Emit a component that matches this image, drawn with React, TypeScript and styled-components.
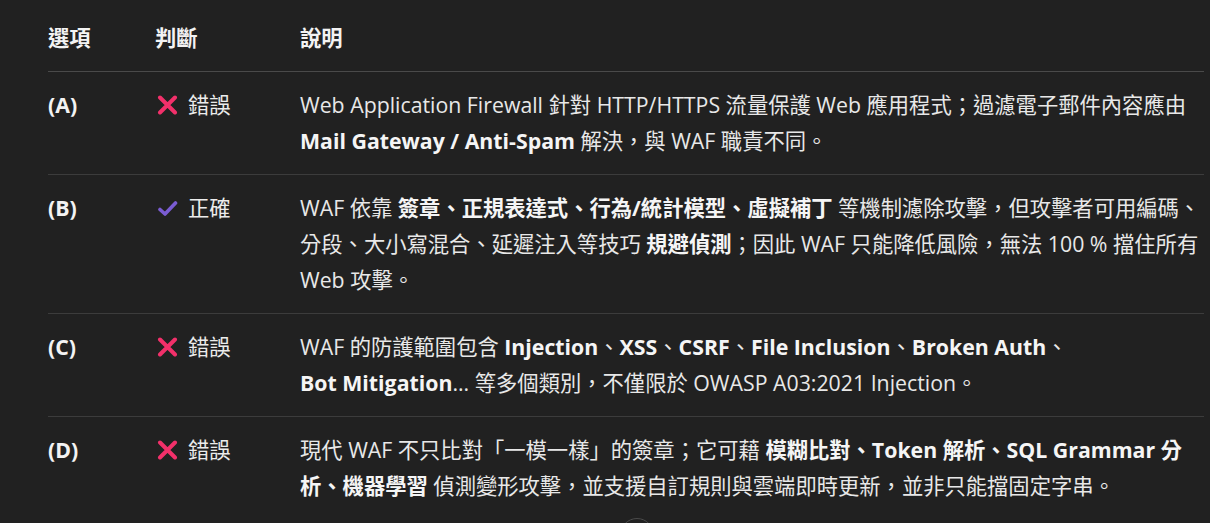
import React from "react";
import styled, { createGlobalStyle } from "styled-components";

const Global = createGlobalStyle`
  html, body { margin: 0; padding: 0; background: #212121; }
  body {
    font-family: "Open Sans", "Noto Sans CJK TC", sans-serif;
    color: #ececec;
  }
`;

const Page = styled.div`
  position: relative;
  width: 1210px;
  height: 523px;
  overflow: hidden;
  padding: 4px 6px 0 48px;
  box-sizing: border-box;
`;

const Table = styled.div`
  display: grid;
  grid-template-columns: 107px 145px 1fr;
  font-size: 21.3px;
  line-height: 36px;
`;

const HeadCell = styled.div`
  font-weight: 700;
  padding: 16px 0 15px;
  border-bottom: 1px solid #4a4a4a;
  color: #f3f3f3;
`;

const Cell = styled.div<{ $first?: boolean }>`
  padding: 15px 0;
  border-top: ${(p) => (p.$first ? "none" : "1px solid #3c3c3c")};
`;

const Option = styled(Cell)`
  font-weight: 700;
  color: #f3f3f3;
`;

const Verdict = styled(Cell)`
  display: flex;
  align-items: flex-start;
`;

const VerdictInner = styled.span`
  display: inline-flex;
  align-items: center;
  gap: 10px;
  height: 36px;
  padding-left: 2px;
`;

const Explain = styled(Cell)`
  color: #e8e8e8;
`;

const B = styled.b`
  font-weight: 700;
  color: #f5f5f5;
`;

const NoWrap = styled.span`
  white-space: nowrap;
`;

const ScrollButton = styled.div`
  position: absolute;
  left: 620px;
  top: 518px;
  width: 32px;
  height: 32px;
  border-radius: 50%;
  border: 1px solid #4a4a4a;
  background: #212121;
`;

const Cross = () => (
  <svg width="21" height="20" viewBox="0 0 21 20">
    <path d="M3 2.5 L18 17.5 M18 2.5 L3 17.5" stroke="#f2306a" strokeWidth="4" strokeLinecap="round" />
  </svg>
);

const Check = () => (
  <svg width="21" height="20" viewBox="0 0 21 20">
    <path d="M3 11.5 L8 16 L18.5 5" stroke="#7a5cd2" strokeWidth="3.6" strokeLinecap="round" strokeLinejoin="round" fill="none" />
  </svg>
);

type Row = { opt: string; ok: boolean; text: React.ReactNode };

const rows: Row[] = [
  {
    opt: "(A)",
    ok: false,
    text: (
      <>
        Web Application Firewall 針對 HTTP/HTTPS 流量保護 Web 應用程式；過濾電子郵件內容應由{" "}
        <B>Mail Gateway / Anti-Spam</B> 解決，與 WAF 職責不同。
      </>
    ),
  },
  {
    opt: "(B)",
    ok: true,
    text: (
      <>
        WAF 依靠 <B>簽章、正規表達式、行為/統計模型、虛擬補丁</B> 等機制濾除攻擊，但攻擊者可用編碼、分段、大小寫混合、延遲注入等技巧{" "}
        <B>規避偵測</B>；因此 WAF 只能降低風險，無法 100 % 擋住所有 Web 攻擊。
      </>
    ),
  },
  {
    opt: "(C)",
    ok: false,
    text: (
      <>
        WAF 的防護範圍包含 <B>Injection</B>、<B>XSS</B>、<B>CSRF</B>、<B>File Inclusion</B>、<B>Broken Auth</B>、
        <NoWrap>
          <B>Bot Mitigation</B>...
        </NoWrap>{" "}
        等多個類別，不僅限於 OWASP A03:2021 Injection。
      </>
    ),
  },
  {
    opt: "(D)",
    ok: false,
    text: (
      <>
        現代 WAF 不只比對「一模一樣」的簽章；它可藉 <B>模糊比對、Token 解析、SQL Grammar 分析、機器學習</B>{" "}
        偵測變形攻擊，並支援自訂規則與雲端即時更新，並非只能擋固定字串。
      </>
    ),
  },
];

export default function App() {
  return (
    <>
      <Global />
      <Page>
        <Table>
          <HeadCell>選項</HeadCell>
          <HeadCell>判斷</HeadCell>
          <HeadCell>說明</HeadCell>
          {rows.map((r, i) => (
            <React.Fragment key={r.opt}>
              <Option $first={i === 0}>{r.opt}</Option>
              <Verdict $first={i === 0}>
                <VerdictInner>
                  {r.ok ? <Check /> : <Cross />}
                  {r.ok ? "正確" : "錯誤"}
                </VerdictInner>
              </Verdict>
              <Explain $first={i === 0}>{r.text}</Explain>
            </React.Fragment>
          ))}
        </Table>
        <ScrollButton />
      </Page>
    </>
  );
}
